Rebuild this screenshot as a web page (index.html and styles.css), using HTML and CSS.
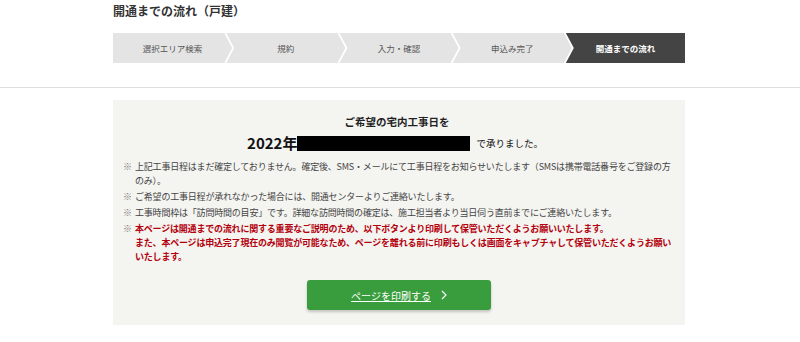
FILE: index.html
```html
<!DOCTYPE html>
<html lang="ja">
<head>
<meta charset="utf-8">
<link rel="stylesheet" href="styles.css">
</head>
<body>
<div class="page">
  <h1 class="title">開通までの流れ（戸建）</h1>
  <ol class="steps">
    <li class="step">選択エリア検索</li>
    <li class="step">規約</li>
    <li class="step">入力・確認</li>
    <li class="step">申込み完了</li>
    <li class="step current">開通までの流れ</li>
  </ol>
</div>
<hr class="rule">
<div class="page">
  <section class="panel">
    <p class="lead">ご希望の宅内工事日を</p>
    <p class="date"><span class="year">2022年</span><span class="redact"></span><span class="accept">で承りました。</span></p>
    <ul class="notes">
      <li class="note"><span class="mark">※</span><span class="txt">上記工事日程はまだ確定しておりません。確定後、SMS・メールにて工事日程をお知らせいたします（SMSは携帯電話番号をご登録の方<br>のみ）。</span></li>
      <li class="note"><span class="mark">※</span><span class="txt">ご希望の工事日程が承れなかった場合には、開通センターよりご連絡いたします。</span></li>
      <li class="note"><span class="mark">※</span><span class="txt">工事時間枠は「訪問時間の目安」です。詳細な訪問時間の確定は、施工担当者より当日伺う直前までにご連絡いたします。</span></li>
      <li class="note warn"><span class="mark">※</span><span class="txt">本ページは開通までの流れに関する重要なご説明のため、以下ボタンより印刷して保管いただくようお願いいたします。<br>また、本ページは申込完了現在のみ閲覧が可能なため、ページを離れる前に印刷もしくは画面をキャプチャして保管いただくようお願い<br>いたします。</span></li>
    </ul>
    <div class="actions">
      <a class="print-btn" href="#"><span class="label">ページを印刷する</span><svg class="chev" width="6" height="10" viewBox="0 0 6 10"><polyline points="1,1 5,5 1,9" fill="none" stroke="#fff" stroke-width="1.2"/></svg></a>
    </div>
  </section>
</div>
</body>
</html>
```
FILE: styles.css
```css
html, body {
  margin: 0;
  padding: 0;
  background: #fff;
}
body {
  font-family: "Noto Sans CJK JP", "Noto Sans", sans-serif;
  color: #333;
}
.page {
  width: 572px;
  margin-left: 113px;
}
.title {
  margin: 0;
  padding-top: 3px;
  font-size: 12px;
  line-height: 16px;
  font-weight: bold;
  color: #333;
}
.steps {
  list-style: none;
  margin: 14px 0 0;
  padding: 0;
  display: flex;
  height: 30px;
}
.step {
  flex: 1;
  background: #e4e4e4;
  color: #555;
  font-size: 8.5px;
  display: flex;
  align-items: center;
  justify-content: center;
  margin-left: -6px;
  clip-path: polygon(0 0, calc(100% - 8px) 0, 100% 50%, calc(100% - 8px) 100%, 0 100%, 8px 50%);
}
.step:first-child {
  margin-left: 0;
  clip-path: polygon(0 0, calc(100% - 8px) 0, 100% 50%, calc(100% - 8px) 100%, 0 100%);
}
.step.current {
  background: #444;
  color: #fff;
  font-weight: bold;
  clip-path: polygon(0 0, 100% 0, 100% 100%, 0 100%, 8px 50%);
}
.rule {
  border: 0;
  border-top: 1px solid #ddd;
  margin: 24px 0 0;
  height: 0;
}
.panel {
  margin-top: 12px;
  background: #f4f4f1;
  padding: 14px 2px 15px 10px;
}
.lead {
  margin: 0;
  padding-right: 12px;
  text-align: center;
  font-size: 10.5px;
  line-height: 16px;
  font-weight: bold;
  color: #222;
}
.date {
  margin: 3px 0 0;
  padding-right: 16px;
  height: 20px;
  display: flex;
  align-items: center;
  justify-content: center;
  color: #111;
}
.year {
  font-size: 15px;
  font-weight: bold;
  line-height: 20px;
}
.redact {
  display: inline-block;
  width: 173px;
  height: 15px;
  background: #000;
}
.accept {
  margin-left: 6px;
  font-size: 9.5px;
  line-height: 20px;
}
.notes {
  list-style: none;
  margin: 7px 0 0;
  padding: 0;
}
.note {
  display: flex;
  font-size: 9px;
  line-height: 14px;
  color: #444;
  margin-bottom: 2px;
}
.note:last-child {
  margin-bottom: 0;
}
.mark {
  flex: 0 0 12px;
  color: #777;
}
.txt {
  flex: 1;
  letter-spacing: -0.2px;
}
.warn .txt {
  color: #b3000c;
  font-weight: bold;
}
.actions {
  margin-top: 16px;
  display: flex;
  justify-content: center;
  padding-right: 8px;
}
.print-btn {
  width: 184px;
  height: 30px;
  background: #3a9d3d;
  border-radius: 3px;
  box-shadow: 0 2px 3px rgba(0,0,0,0.2);
  display: flex;
  align-items: center;
  justify-content: center;
  gap: 10px;
  color: #fff;
  text-decoration: none;
  font-size: 10px;
}
.print-btn .label {
  text-decoration: underline;
}
.chev {
  display: block;
}
```
